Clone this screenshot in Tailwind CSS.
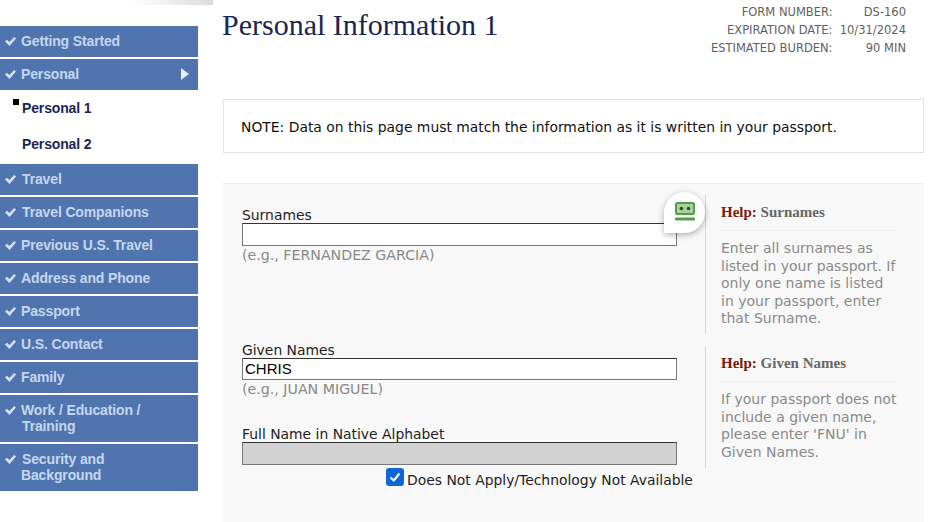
<!DOCTYPE html>
<html><head><meta charset="utf-8"><script src="https://cdn.jsdelivr.net/npm/@tailwindcss/browser@4"></script></head>
<body class="bg-white">
<div class="relative flex w-[928px] h-[522px] overflow-hidden bg-white font-['DejaVu_Sans',sans-serif]">
  <div class="absolute left-[130px] top-0 w-[83px] h-[5px] bg-gradient-to-r from-white to-[#dcdcdc]"></div>
  <nav class="w-[198px] shrink-0 pt-[26px] font-['Liberation_Sans',sans-serif] text-[14px] tracking-[-0.14px] font-bold text-[#c5d8f2]">
    <div class="flex items-center h-[31px] mb-[2px] bg-[#4f74ae] pl-[5px] gap-[5px]"><svg class="w-[11px] h-[9px]" viewBox="0 0 11 9"><path d="M0 4.5 2 2.8 4.4 5 9.2 0 11 1.6 4.5 9z" fill="#d5e3f5"/></svg><span>Getting Started</span></div>
    <div class="flex items-center h-[31px] bg-[#4f74ae] pl-[5px] gap-[5px]"><svg class="w-[11px] h-[9px]" viewBox="0 0 11 9"><path d="M0 4.5 2 2.8 4.4 5 9.2 0 11 1.6 4.5 9z" fill="#d5e3f5"/></svg><span>Personal</span><svg class="ml-auto mr-[9px] w-[8px] h-[12px] -mt-[1px]" viewBox="0 0 8 12"><path d="M0 0 8 6 0 12z" fill="#e6eef9"/></svg></div>
    <div class="relative h-[36px] pl-[22px] flex items-center pt-[1px] text-[#1b2553]"><span class="absolute left-[13px] top-[9px] w-[6px] h-[6px] bg-black"></span>Personal 1</div>
    <div class="h-[38px] pl-[22px] flex items-center text-[#1b2553] pb-[2px]">Personal 2</div>
    <div class="flex items-center h-[31px] mb-[2px] bg-[#4f74ae] pl-[5px] gap-[6px]"><svg class="w-[11px] h-[9px]" viewBox="0 0 11 9"><path d="M0 4.5 2 2.8 4.4 5 9.2 0 11 1.6 4.5 9z" fill="#d5e3f5"/></svg><span>Travel</span></div>
    <div class="flex items-center h-[31px] mb-[2px] bg-[#4f74ae] pl-[5px] gap-[6px]"><svg class="w-[11px] h-[9px]" viewBox="0 0 11 9"><path d="M0 4.5 2 2.8 4.4 5 9.2 0 11 1.6 4.5 9z" fill="#d5e3f5"/></svg><span>Travel Companions</span></div>
    <div class="flex items-center h-[31px] mb-[2px] bg-[#4f74ae] pl-[5px] gap-[5px]"><svg class="w-[11px] h-[9px]" viewBox="0 0 11 9"><path d="M0 4.5 2 2.8 4.4 5 9.2 0 11 1.6 4.5 9z" fill="#d5e3f5"/></svg><span>Previous U.S. Travel</span></div>
    <div class="flex items-center h-[31px] mb-[2px] bg-[#4f74ae] pl-[5px] gap-[5px]"><svg class="w-[11px] h-[9px]" viewBox="0 0 11 9"><path d="M0 4.5 2 2.8 4.4 5 9.2 0 11 1.6 4.5 9z" fill="#d5e3f5"/></svg><span>Address and Phone</span></div>
    <div class="flex items-center h-[31px] mb-[2px] bg-[#4f74ae] pl-[5px] gap-[5px]"><svg class="w-[11px] h-[9px]" viewBox="0 0 11 9"><path d="M0 4.5 2 2.8 4.4 5 9.2 0 11 1.6 4.5 9z" fill="#d5e3f5"/></svg><span>Passport</span></div>
    <div class="flex items-center h-[31px] mb-[2px] bg-[#4f74ae] pl-[5px] gap-[5px]"><svg class="w-[11px] h-[9px]" viewBox="0 0 11 9"><path d="M0 4.5 2 2.8 4.4 5 9.2 0 11 1.6 4.5 9z" fill="#d5e3f5"/></svg><span>U.S. Contact</span></div>
    <div class="flex items-center h-[31px] mb-[2px] bg-[#4f74ae] pl-[5px] gap-[5px]"><svg class="w-[11px] h-[9px]" viewBox="0 0 11 9"><path d="M0 4.5 2 2.8 4.4 5 9.2 0 11 1.6 4.5 9z" fill="#d5e3f5"/></svg><span>Family</span></div>
    <div class="flex items-start h-[47px] mb-[2px] bg-[#4f74ae] pl-[5px] pt-[7px] gap-[5px] leading-[16px]"><svg class="w-[11px] h-[9px] mt-[4px] shrink-0" viewBox="0 0 11 9"><path d="M0 4.5 2 2.8 4.4 5 9.2 0 11 1.6 4.5 9z" fill="#d5e3f5"/></svg><span>Work / Education /<br><span class="ml-[1px]">Training</span></span></div>
    <div class="flex items-start h-[47px] bg-[#4f74ae] pl-[5px] pt-[7px] gap-[5px] leading-[16px]"><svg class="w-[11px] h-[9px] mt-[4px] shrink-0" viewBox="0 0 11 9"><path d="M0 4.5 2 2.8 4.4 5 9.2 0 11 1.6 4.5 9z" fill="#d5e3f5"/></svg><span><span class="ml-[1px]">Security and</span><br>Background</span></div>
  </nav>
  <main class="ml-[25px] w-[701px] shrink-0">
    <header class="flex justify-between h-[99px]">
      <h1 class="font-['Liberation_Serif',serif] text-[30px] leading-[34px] pt-[8px] text-[#1b2553] -ml-[1px]">Personal Information 1</h1>
      <dl class="grid grid-cols-[auto_73.5px] h-fit mt-[3px] mr-[18px] text-[11.5px] leading-[18px] text-[#5f5f5f] text-right">
        <dt>FORM NUMBER:</dt><dd>DS-160</dd>
        <dt>EXPIRATION DATE:</dt><dd>10/31/2024</dd>
        <dt>ESTIMATED BURDEN:</dt><dd>90 MIN</dd>
      </dl>
    </header>
    <div class="h-[54px] border border-[#e2e2e2] flex items-center pl-[17px] pt-[2px] text-[13.9px] text-[#111]">NOTE: Data on this page must match the information as it is written in your passport.</div>
    <section class="mt-[30px] h-[339px] bg-[#f8f8f8] border-t border-[#ececec] relative text-[13.9px]">
      <div class="flex h-[150px] pt-[10px]">
        <div class="w-[482px] pl-[19px] pt-[13px]">
          <label class="block leading-[16px] text-[#222]">Surnames</label>
          <div class="w-[435px] h-[23px] bg-white border border-[#777] border-t-[#333]"></div>
          <p class="text-[#888] leading-[18px] text-[14.2px]">(e.g., FERNANDEZ GARCIA)</p>
        </div>
        <aside class="w-[192px] h-[140px] border-l border-[#d8d8d8] pl-[15px] text-[14px]">
          <h3 class="font-['Liberation_Serif',serif] font-bold text-[15px] h-[37px] pt-[10px] leading-[17px] border-b border-dotted border-[#e6e6e6] text-[#666]"><span class="text-[#7a1a0a]">Help:</span> Surnames</h3>
          <p class="text-[#8a8a8a] leading-[17.5px] mt-[9px]">Enter all surnames as listed in your passport. If only one name is listed in your passport, enter that Surname.</p>
        </aside>
      </div>
      <div class="flex pt-[13px]">
        <div class="w-[482px] pl-[19px] -mt-[5px]">
          <label class="block leading-[16px] text-[#222]">Given Names</label>
          <div class="w-[435px] h-[22px] bg-white border border-[#777] border-t-[#333] pl-[2px] leading-[19px] text-[15px] font-['Liberation_Sans',sans-serif] text-black">CHRIS</div>
          <p class="text-[#888] leading-[18px] text-[14.2px]">(e.g., JUAN MIGUEL)</p>
          <label class="block leading-[16px] text-[#222] mt-[28px]">Full Name in Native Alphabet</label>
          <div class="w-[435px] h-[23px] bg-[#d3d3d3] border border-[#777] border-t-[#333]"></div>
          <div class="flex items-start mt-[3px] ml-[144px] w-[320px] gap-[3px] text-[#222]"><span class="flex items-center justify-center w-[18px] h-[18px] rounded-[3px] bg-[#0f66d8]"><svg class="w-[14px] h-[14px]" viewBox="0 0 14 14"><path d="M2.5 7.5 5.8 10.5 11.5 3.5" fill="none" stroke="#fff" stroke-width="2"/></svg></span><span class="mt-[2px] leading-[21px]">Does Not Apply/Technology Not Available</span></div>
        </div>
        <aside class="w-[192px] h-[121px] border-l border-[#d8d8d8] pl-[15px] text-[14px]">
          <h3 class="font-['Liberation_Serif',serif] font-bold text-[15px] h-[35px] pt-[8px] leading-[17px] border-b border-dotted border-[#e6e6e6] text-[#666]"><span class="text-[#7a1a0a]">Help:</span> Given Names</h3>
          <p class="text-[#8a8a8a] leading-[17.5px] mt-[9px]">If your passport does not include a given name, please enter 'FNU' in Given Names.</p>
        </aside>
      </div>
      <div class="absolute left-[441px] top-[8px] w-[41px] h-[41px] bg-white rounded-[21px] rounded-bl-none shadow-[0_2px_6px_rgba(0,0,0,0.3)] flex items-center justify-center">
        <svg class="w-[20px] h-[19px] -mt-[2px]" viewBox="0 0 20 19"><rect x="1" y="1" width="18" height="11" rx="1.5" fill="#a9d29f" stroke="#4f9e45" stroke-width="2"/><circle cx="6.5" cy="6.5" r="1.8" fill="#2f4a35"/><circle cx="13.5" cy="6.5" r="1.8" fill="#2f4a35"/><rect x="0" y="15.5" width="20" height="3" rx="1" fill="#4f9e45"/></svg>
      </div>
    </section>
  </main>
</div>
</body></html>
